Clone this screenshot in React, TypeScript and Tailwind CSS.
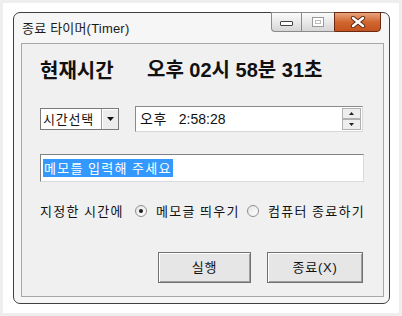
import type { ReactNode } from "react";

const KR = "font-['Noto_Sans_CJK_KR',sans-serif]";
const MIX = "font-['Liberation_Sans','Noto_Sans_CJK_KR',sans-serif]";

function CaptionButton({ kind }: { kind: "min" | "max" | "close" }) {
  if (kind === "close") {
    return (
      <div className="w-[47px] h-[20px] rounded-br-[4px] border border-[#6b2a10] bg-gradient-to-b from-[#e9a37c] via-[#d0672f] to-[#c4521e] flex items-center justify-center">
        <svg width="16" height="12" viewBox="0 0 16 12">
          <path d="M3 2 L13 10 M13 2 L3 10" stroke="#5a2a12" strokeWidth="4.2" strokeLinecap="round" />
          <path d="M3 2 L13 10 M13 2 L3 10" stroke="#ffffff" strokeWidth="2.4" strokeLinecap="round" />
        </svg>
      </div>
    );
  }
  return (
    <div
      className={`h-[20px] border border-r-0 border-[#8a8a8a] bg-gradient-to-b from-[#fbfbfb] via-[#e9e9e9] to-[#d6d6d6] flex items-center justify-center ${
        kind === "min" ? "w-[30px] rounded-bl-[4px]" : "w-[33px]"
      }`}
    >
      {kind === "min" ? (
        <div className="w-[13px] h-[5px] mt-[3px] border border-[#444] bg-white rounded-[1px]" />
      ) : (
        <div className="w-[12px] h-[10px] border border-[#999] bg-white flex items-center justify-center">
          <div className="w-[6px] h-[4px] border border-[#bbb]" />
        </div>
      )}
    </div>
  );
}

function Radio({ checked }: { checked?: boolean }) {
  return (
    <span className="w-[12px] h-[12px] rounded-full border border-[#8f8f8f] bg-gradient-to-br from-[#e4e4e4] to-white flex items-center justify-center shrink-0">
      {checked && <span className="w-[4px] h-[4px] rounded-full bg-[#1f1f1f]" />}
    </span>
  );
}

function PushButton({ children, w }: { children: ReactNode; w: string }) {
  return (
    <div className={`${w} h-[31px] border border-[#707070] bg-[#e6e6e6] shadow-[inset_1px_1px_0_#ffffff,inset_-1px_-1px_0_#a0a0a0] flex items-center justify-center text-[13px] tracking-[0.8px] text-[#111] ${MIX}`}>
      {children}
    </div>
  );
}

export default function App() {
  return (
    <div className="w-[402px] h-[316px] bg-white border-[3px] border-[#eeeeee] pl-[10px] pt-[9px]">
      <div className="w-[377px] h-[292px] rounded-[7px] border border-[#404040] bg-[#f6f6f6] flex flex-col">
        {/* title bar */}
        <div className="h-[30px] flex items-start justify-between pl-[8px] pr-[8px]">
          <span className={`mt-[6px] text-[13px] tracking-[0.2px] text-[#1a1a1a] ${MIX}`}>종료 타이머(Timer)</span>
          <div className="flex -mt-[1px]">
            <CaptionButton kind="min" />
            <CaptionButton kind="max" />
            <CaptionButton kind="close" />
          </div>
        </div>

        {/* client area */}
        <div className="ml-[7px] w-[363px] h-[254px] border border-[#a8a8a8] bg-[#f0f0f0] pl-[18px] pt-[14px]">
          <div className={`h-[24px] flex items-center text-[20px] font-bold text-[#111] ${KR}`}>
            <span className="w-[107px]">현재시간</span>
            <span className={MIX}>오후 02시 58분 31초</span>
          </div>

          <div className="mt-[24px] h-[26px] flex items-center">
            <div className={`w-[79px] h-[22px] bg-white border border-[#7a7a7a] flex items-center justify-between text-[13px] tracking-[0.8px] text-[#111] ${KR}`}>
              <span className="pl-[2px]">시간선택</span>
              <span className="w-[17px] h-[20px] border-l border-[#9a9a9a] bg-[#ececec] shadow-[inset_1px_1px_0_#ffffff] flex items-center justify-center">
                <svg width="7" height="4" viewBox="0 0 7 4">
                  <path d="M0 0 L7 0 L3.5 4 Z" fill="#111" />
                </svg>
              </span>
            </div>
            <div className="ml-[16px] w-[228px] h-[26px] bg-white border border-[#8a8a8a] border-r-[#d8d8d8] border-b-[#d8d8d8] flex items-center justify-between">
              <span className={`pl-[4px] text-[14px] text-[#111] ${MIX}`}>
                <span className="mr-[12px] tracking-[0.5px]">오후</span>2:58:28
              </span>
              <div className="flex flex-col mr-[1px]">
                {["up", "down"].map((d) => (
                  <span
                    key={d}
                    className="w-[19px] h-[11px] border border-[#b0b0b0] bg-[#eeeeee] flex items-center justify-center"
                  >
                    <svg width="5" height="3" viewBox="0 0 5 3">
                      <path d={d === "up" ? "M0 3 L5 3 L2.5 0 Z" : "M0 0 L5 0 L2.5 3 Z"} fill="#222" />
                    </svg>
                  </span>
                ))}
              </div>
            </div>
          </div>

          <div className="mt-[22px] w-[324px] h-[28px] bg-white border border-[#828282] border-r-[#dadada] border-b-[#dadada] flex items-center pl-[2px]">
            <span className={`bg-[#3399ff] text-white text-[13px] tracking-[1.3px] leading-[18px] px-[1px] ${KR}`}>메모를 입력해 주세요</span>
          </div>

          <div className={`mt-[19px] h-[20px] flex items-center text-[13px] tracking-[1.3px] text-[#111] ${KR}`}>
            <span className="w-[95px]">지정한 시간에</span>
            <Radio checked />
            <span className="ml-[9px] w-[91px]">메모글 띄우기</span>
            <Radio />
            <span className="ml-[9px]">컴퓨터 종료하기</span>
          </div>

          <div className="mt-[31px] flex pl-[118px] gap-[16px]">
            <PushButton w="w-[93px]">실행</PushButton>
            <PushButton w="w-[96px]">종료(X)</PushButton>
          </div>
        </div>
      </div>
    </div>
  );
}
